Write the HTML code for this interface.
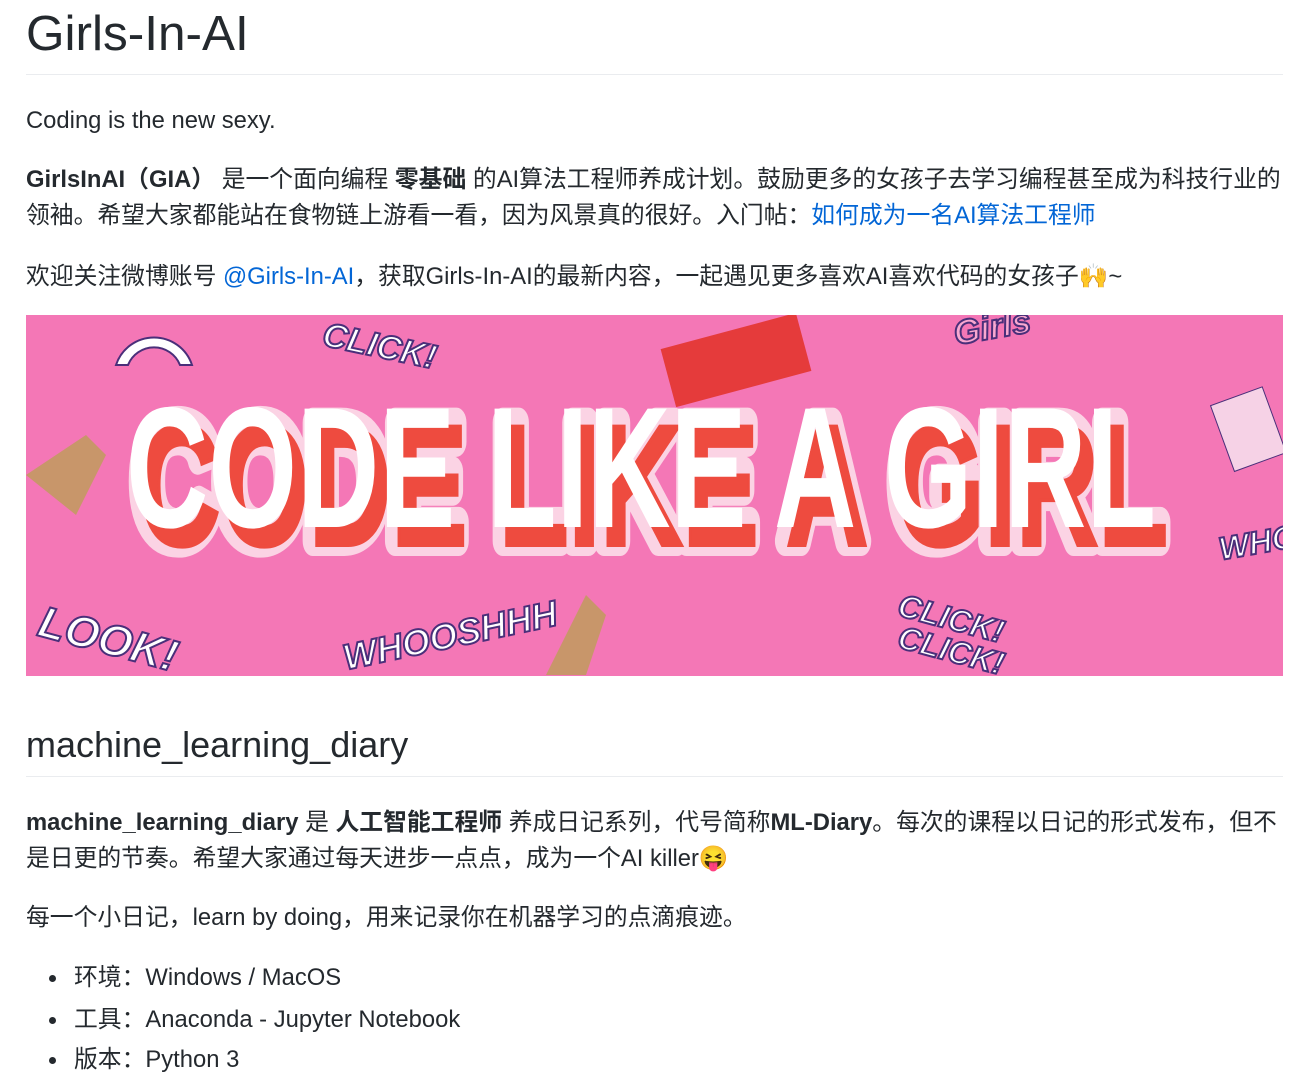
<!DOCTYPE html>
<html><head><meta charset="utf-8"><style>
body{margin:0;background:#fff;width:1311px;height:1070px;overflow:hidden;position:relative;font-family:"Liberation Sans","Noto Sans CJK SC",sans-serif;color:#24292e}
.l{position:absolute;left:26px;white-space:nowrap;font-size:23.8px;line-height:30px}
.hr{position:absolute;left:26px;width:1257px;height:1px;background:#eaecef}
a{color:#0366d6;text-decoration:none}
b{font-weight:bold}
.dot{position:absolute;left:49px;width:7px;height:7px;border-radius:50%;background:#24292e}
</style></head><body>
<div class="l" style="top:4px;font-size:49.5px;line-height:60px">Girls-In-AI</div>
<div class="hr" style="top:74px"></div>
<div class="l" style="top:106px">Coding is the new sexy.</div>
<div class="l" style="top:165px"><b>GirlsInAI（GIA）</b> 是一个面向编程 <b>零基础</b> 的AI算法工程师养成计划。鼓励更多的女孩子去学习编程甚至成为科技行业的</div>
<div class="l" style="top:201px">领袖。希望大家都能站在食物链上游看一看，因为风景真的很好。入门帖：<a>如何成为一名AI算法工程师</a></div>
<div class="l" style="top:262px">欢迎关注微博账号 <a>@Girls-In-AI</a>，获取Girls-In-AI的最新内容，一起遇见更多喜欢AI喜欢代码的女孩子🙌~</div>
<svg style="position:absolute;left:26px;top:315px" width="1257" height="361" viewBox="0 0 1257 361">
<rect width="1257" height="361" fill="#f477b6"/>
<g font-family="Liberation Sans Narrow,Liberation Sans,sans-serif" font-weight="bold" font-size="172">
<text x="108" y="226" textLength="1030" lengthAdjust="spacingAndGlyphs" fill="#fbd3e4" stroke="#fbd3e4" stroke-width="30" stroke-linejoin="round">CODE LIKE A GIRL</text>
<text x="112" y="230" textLength="1030" lengthAdjust="spacingAndGlyphs" fill="#ee4b3f" stroke="#ee4b3f" stroke-width="4">CODE LIKE A GIRL</text>
<text x="100" y="212" textLength="1030" lengthAdjust="spacingAndGlyphs" fill="#fff">CODE LIKE A GIRL</text>
</g>
<g font-family="Liberation Sans,sans-serif" font-weight="bold" font-style="italic" fill="#fff" stroke="#4a2f7a" stroke-width="2">
<text x="295" y="30" font-size="34" transform="rotate(12 295 30)">CLICK!</text>
<text x="10" y="320" font-size="44" transform="rotate(15 10 320)">LOOK!</text>
<text x="320" y="355" font-size="36" transform="rotate(-12 320 355)">WHOOSHHH</text>
<text x="870" y="300" font-size="32" transform="rotate(15 870 300)">CLICK!</text>
<text x="870" y="332" font-size="32" transform="rotate(15 870 332)">CLICK!</text>
<text x="1195" y="245" font-size="32" transform="rotate(-10 1195 245)">WHO</text>
<text x="930" y="30" font-size="34" fill="#f9a8d0" transform="rotate(-10 930 30)">Girls</text>
</g>
<rect x="640" y="15" width="140" height="60" fill="#e53b3b" transform="rotate(-15 710 45)"/>
<path d="M90 50a40 40 0 0 1 76 0h-12a28 28 0 0 0-52 0z" fill="#fff" stroke="#4a2f7a" stroke-width="2"/>
<path d="M0 160l60 -40 20 20 -30 60z" fill="#c8966a"/>
<path d="M520 360l40 -80 20 20 -20 60z" fill="#c8966a"/>
<rect x="1195" y="80" width="55" height="70" fill="#f6d2e6" stroke="#4a2f7a" transform="rotate(-20 1220 115)"/>
</svg>
<div class="l" style="top:722px;font-size:36px;line-height:46px">machine_learning_diary</div>
<div class="hr" style="top:776px"></div>
<div class="l" style="top:808px"><b>machine_learning_diary</b> 是 <b>人工智能工程师</b> 养成日记系列，代号简称<b>ML-Diary</b>。每次的课程以日记的形式发布，但不</div>
<div class="l" style="top:844px">是日更的节奏。希望大家通过每天进步一点点，成为一个AI killer😝</div>
<div class="l" style="top:903px">每一个小日记，learn by doing，用来记录你在机器学习的点滴痕迹。</div>
<div class="dot" style="top:975px"></div><div class="l" style="left:74px;top:963px">环境：Windows / MacOS</div>
<div class="dot" style="top:1017px"></div><div class="l" style="left:74px;top:1005px">工具：Anaconda - Jupyter Notebook</div>
<div class="dot" style="top:1057px"></div><div class="l" style="left:74px;top:1045px">版本：Python 3</div>
</body></html>
